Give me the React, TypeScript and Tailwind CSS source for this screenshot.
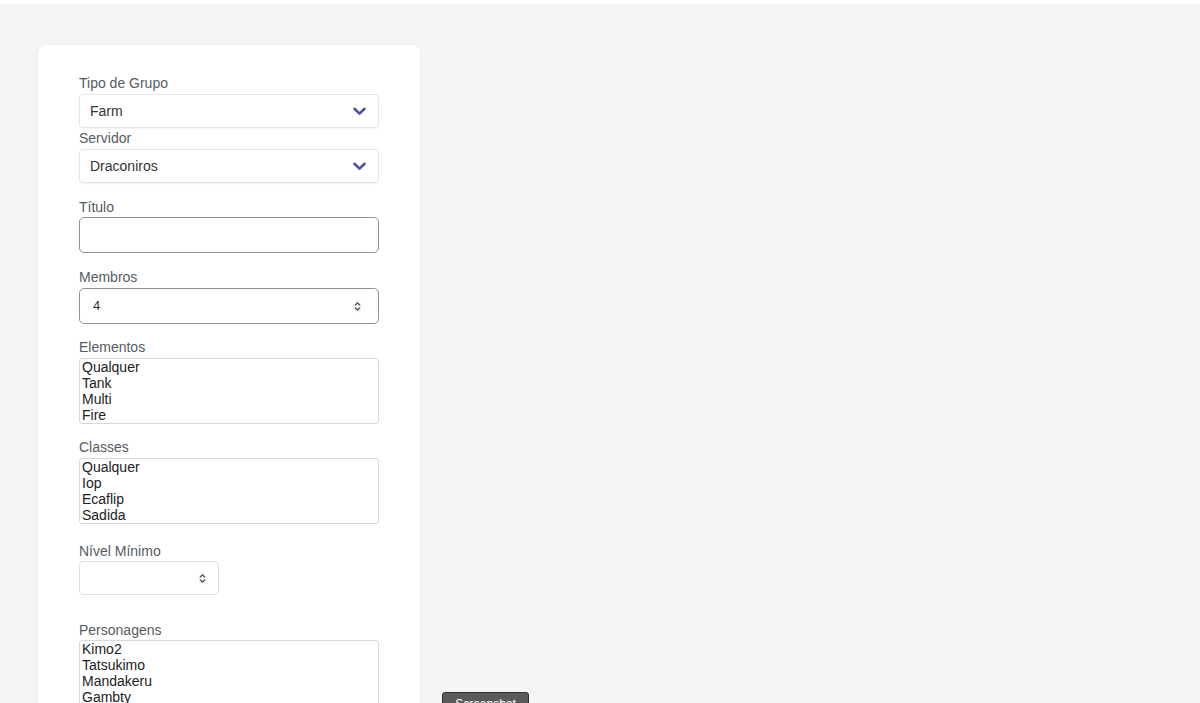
import React from 'react'

const Chevron = () => (
  <svg width="13" height="9" viewBox="0 0 13 9" className="shrink-0">
    <path d="M1.5 1.8 L6.5 6.6 L11.5 1.8" fill="none" stroke="#4b4fa8" strokeWidth="2.6" strokeLinecap="round" strokeLinejoin="round" />
  </svg>
)

const Spinner = () => (
  <svg width="9" height="13" viewBox="0 0 9 13" className="shrink-0">
    <rect x="0.5" y="0.5" width="8" height="12" rx="4" fill="#f3f4f6" />
    <path d="M2.3 5 L4.5 2.8 L6.7 5" fill="none" stroke="#444" strokeWidth="1.1" strokeLinecap="round" strokeLinejoin="round" />
    <path d="M2.3 8 L4.5 10.2 L6.7 8" fill="none" stroke="#444" strokeWidth="1.1" strokeLinecap="round" strokeLinejoin="round" />
  </svg>
)

const Label = ({ children, className = '' }: { children: React.ReactNode; className?: string }) => (
  <div className={`h-5 leading-5 text-[14px] text-[#555b63] ${className}`}>{children}</div>
)

const SelectBox = ({ value }: { value: string }) => (
  <div className="mt-px h-[34px] flex items-center justify-between pl-[10px] pr-[12px] bg-white border border-[#e3e5e8] rounded-[4px] shadow-[0_1px_2px_rgba(0,0,0,0.06)] text-[14px] text-[#333]">
    <span>{value}</span>
    <Chevron />
  </div>
)

const ListBox = ({ items }: { items: string[] }) => (
  <div className="h-[66px] overflow-hidden border border-[#d7d9dc] rounded-[3px] bg-white px-[2px] text-[14px] leading-4 text-[#222]">
    {items.map((it) => (
      <div key={it} className="h-4">{it}</div>
    ))}
  </div>
)

export default function App() {
  return (
    <div className="min-h-screen bg-white font-['Liberation_Sans',Arial,sans-serif] relative overflow-hidden">
      <div className="h-[4px] bg-white" />
      <div className="h-[699px] bg-[#f3f4f6] pt-[41px] pl-[38px] overflow-hidden">
        <div className="w-[382px] h-[700px] bg-white rounded-[8px] shadow-[0_0_3px_rgba(0,0,0,0.06)] px-[41px] pt-[28px]">
          <Label>Tipo de Grupo</Label>
          <SelectBox value="Farm" />
          <Label>Servidor</Label>
          <SelectBox value="Draconiros" />

          <Label className="mt-[14px]">Título</Label>
          <div className="h-[36px] border border-[#8e9299] rounded-[5px] bg-white" />

          <Label className="mt-[14px]">Membros</Label>
          <div className="mt-px h-[36px] border border-[#8e9299] rounded-[5px] bg-white flex items-center justify-between pl-[13px] pr-[16px] text-[13px] text-[#333]">
            <span>4</span>
            <Spinner />
          </div>

          <Label className="mt-[13px]">Elementos</Label>
          <div className="mt-px">
            <ListBox items={['Qualquer', 'Tank', 'Multi', 'Fire']} />
          </div>

          <Label className="mt-[13px]">Classes</Label>
          <div className="mt-px">
            <ListBox items={['Qualquer', 'Iop', 'Ecaflip', 'Sadida']} />
          </div>

          <Label className="mt-[17px]">Nível Mínimo</Label>
          <div className="w-[140px] h-[34px] border border-[#dcdee1] rounded-[4px] bg-white flex items-center justify-end pr-[11px]">
            <Spinner />
          </div>

          <Label className="mt-[25px]">Personagens</Label>
          <ListBox items={['Kimo2', 'Tatsukimo', 'Mandakeru', 'Gambty']} />
        </div>
      </div>
      <button className="absolute left-[442px] top-[692px] w-[87px] h-[24px] bg-[#5a5a5a] border border-[#2e2e2e] rounded-[3px] text-white text-[12px] leading-[18px] text-center">
        Screenshot
      </button>
    </div>
  )
}
